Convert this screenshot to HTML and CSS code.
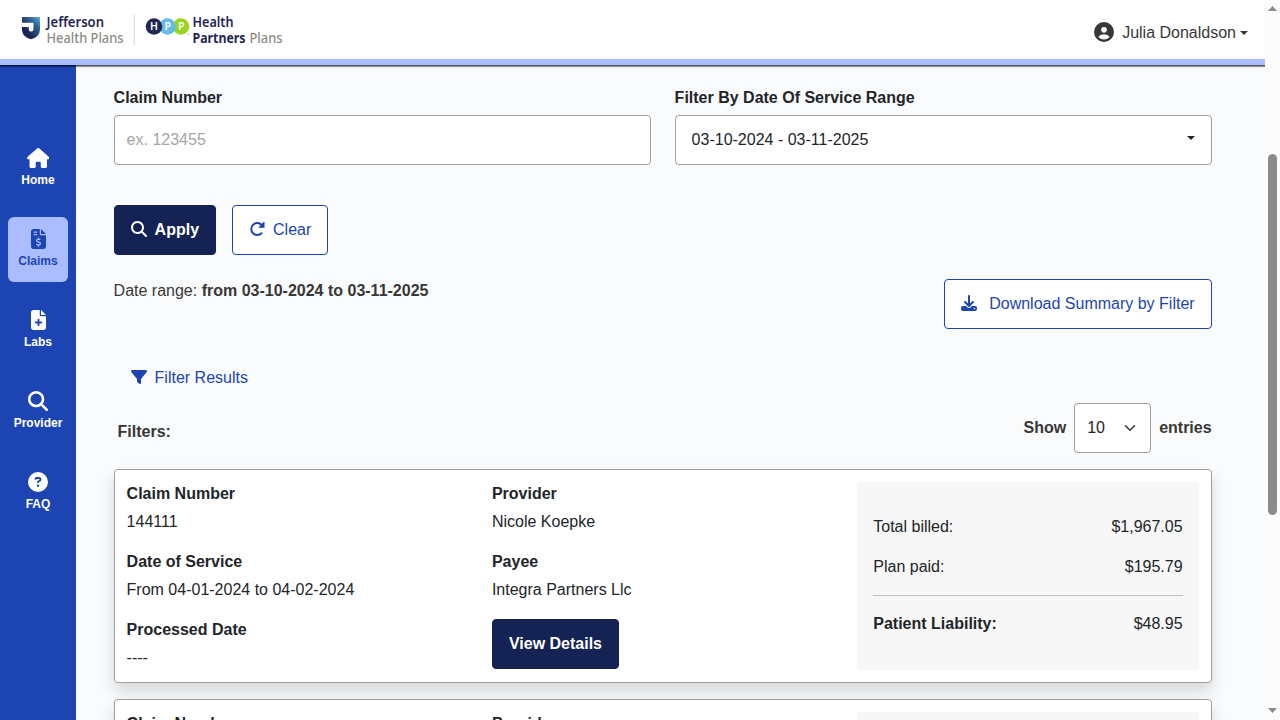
FILE: index.html
```html
<!DOCTYPE html>
<html lang="en">
<head>
<meta charset="utf-8">
<title>Claims</title>
<link rel="stylesheet" href="styles.css">
</head>
<body>
<div class="window">
  <div class="app">
    <header class="header">
      <svg class="logo" width="270" height="40" viewBox="0 0 270 40">
        <defs>
          <linearGradient id="shield" x1="1" y1="0" x2=".35" y2=".75">
            <stop offset="0" stop-color="#5fb3df"/>
            <stop offset=".45" stop-color="#2d5f92"/>
            <stop offset="1" stop-color="#1c2450"/>
          </linearGradient>
        </defs>
        <path d="M2 5H20V17Q20 25 11 27.200Q3 25.500 2 18.500V15H8.800V17.300Q8.800 19.500 11 19.500Q13.500 19.500 13.500 17V10.700H2Z" fill="url(#shield)"/>
        <g class="logo-text">
          <text x="26.500" y="15.300" textLength="57.500" lengthAdjust="spacingAndGlyphs" class="logo-navy">Jefferson</text>
          <text x="26.500" y="31" textLength="77" lengthAdjust="spacingAndGlyphs" class="logo-gray">Health Plans</text>
          <text x="172.500" y="15.300" textLength="41" lengthAdjust="spacingAndGlyphs" class="logo-navy">Health</text>
          <text x="172.500" y="31" textLength="53" lengthAdjust="spacingAndGlyphs" class="logo-navy bold">Partners</text>
          <text x="229.500" y="31" textLength="33" lengthAdjust="spacingAndGlyphs" class="logo-gray">Plans</text>
        </g>
        <path d="M114.300 3V33" stroke="#dcdcdc" stroke-width="1.200"/>
        <circle cx="161" cy="14.500" r="8.300" fill="#97d51f"/>
        <circle cx="147.500" cy="14.500" r="8.300" fill="#68bbe6"/>
        <circle cx="134" cy="14.500" r="8.300" fill="#1f2654"/>
        <g class="logo-initials"><text x="134" y="18.300">H</text><text x="147.700" y="18.300">P</text><text x="161.200" y="18.300">P</text></g>
        <circle cx="18.700" cy="25" r=".8" fill="#c4c4c4"/>
        <circle cx="168" cy="22" r=".8" fill="#b4b4b4"/>
      </svg>
      <div class="user">
        <svg width="20" height="20" viewBox="0 0 512 512"><path d="M399 384.200C376.900 345.800 335.400 320 288 320l-64 0c-47.400 0-88.900 25.800-111 64.200c35.200 39.200 86.200 63.800 143 63.800s107.800-24.700 143-63.800zM0 256a256 256 0 1 1 512 0A256 256 0 1 1 0 256zm256 16a72 72 0 1 0 0-144 72 72 0 1 0 0 144z"/></svg>
        <span>Julia Donaldson</span><i class="caret"></i>
      </div>
    </header>
    <div class="body">
      <nav class="sidebar">
        <a class="nav-item"><svg width="22.500" height="20" viewBox="0 0 576 512"><path d="M575.800 255.500c0 18-15 32.100-32 32.100l-32 0 .7 160.200c0 2.700-.2 5.400-.5 8.100l0 16.200c0 22.100-17.900 40-40 40l-16 0c-1.100 0-2.200 0-3.300-.1c-1.400 .1-2.800 .1-4.200 .1L416 512l-24 0c-22.100 0-40-17.900-40-40l0-24 0-64c0-17.700-14.300-32-32-32l-64 0c-17.700 0-32 14.300-32 32l0 64 0 24c0 22.100-17.900 40-40 40l-24 0-31.900 0c-1.500 0-3-.1-4.500-.2c-1.200 .1-2.400 .2-3.600 .2l-16 0c-22.100 0-40-17.900-40-40l0-112c0-.9 0-1.900 .1-2.800l0-69.700-32 0c-18 0-32-14-32-32.100c0-9 3-17 10-24L266.400 8c7-7 15-8 22-8s15 2 21 7L564.800 231.500c8 7 12 15 11 24z"/></svg>Home</a>
        <a class="nav-item active"><svg width="15" height="20" viewBox="0 0 384 512"><path d="M64 0C28.700 0 0 28.700 0 64L0 448c0 35.300 28.700 64 64 64l256 0c35.300 0 64-28.700 64-64l0-288-128 0c-17.700 0-32-14.300-32-32L224 0 64 0zM256 0l0 128 128 0L256 0zM64 80c0-8.800 7.200-16 16-16l64 0c8.800 0 16 7.200 16 16s-7.200 16-16 16L80 96c-8.800 0-16-7.200-16-16zm0 64c0-8.800 7.200-16 16-16l64 0c8.800 0 16 7.200 16 16s-7.200 16-16 16l-64 0c-8.800 0-16-7.200-16-16zm128 72c8.800 0 16 7.200 16 16l0 17.300c8.500 1.200 16.700 3.100 24.100 5.100c8.500 2.300 13.600 11 11.300 19.600s-11 13.600-19.600 11.300c-11.100-3-22-5.200-32.100-5.300c-8.400-.1-17.400 1.800-23.600 5.500c-5.700 3.400-8.100 7.300-8.100 12.800c0 3.700 1.300 6.500 7.300 10.100c6.900 4.100 16.600 7.100 29.200 10.900l.5 .1c11.300 3.400 25.300 7.600 36.300 14.600c12.100 7.600 22.400 19.700 22.700 38.200c.3 19.300-9.600 33.300-22.900 41.600c-7.700 4.800-16.400 7.600-25.100 9.100l0 17.100c0 8.800-7.200 16-16 16s-16-7.200-16-16l0-17.800c-11.200-2.100-21.700-5.700-30.900-8.900c-2.100-.7-4.200-1.400-6.200-2.100c-8.400-2.800-12.900-11.900-10.100-20.200s11.900-12.900 20.200-10.100c2.500 .8 4.800 1.600 7.100 2.400c13.600 4.600 24.600 8.400 36.300 8.700c9.100 .3 17.900-1.700 23.700-5.300c5.100-3.200 7.900-7.300 7.800-14c-.1-4.600-1.800-7.800-7.700-11.600c-6.800-4.300-16.500-7.400-29-11.200l-1.600-.5c-11-3.300-24.300-7.300-34.800-13.700c-12-7.200-22.600-18.900-22.700-37.300c-.1-19.400 10.800-32.800 23.800-40.500c7.500-4.400 15.800-7.200 24.100-8.700l0-17.300c0-8.800 7.200-16 16-16z"/></svg>Claims</a>
        <a class="nav-item"><svg width="15" height="20" viewBox="0 0 384 512"><path fill-rule="evenodd" d="M64 0C28.700 0 0 28.700 0 64L0 448c0 35.300 28.700 64 64 64l256 0c35.300 0 64-28.700 64-64l0-288-128 0c-17.700 0-32-14.300-32-32L224 0 64 0zM256 0l0 128 128 0L256 0zM168 248c0-13.300 10.700-24 24-24s24 10.700 24 24l0 48 48 0c13.300 0 24 10.700 24 24s-10.700 24-24 24l-48 0 0 48c0 13.300-10.700 24-24 24s-24-10.700-24-24l0-48-48 0c-13.300 0-24-10.700-24-24s10.700-24 24-24l48 0 0-48z"/></svg>Labs</a>
        <a class="nav-item"><svg width="20" height="20" viewBox="0 0 512 512"><path d="M416 208c0 45.900-14.900 88.300-40 122.700L502.600 457.400c12.500 12.500 12.500 32.800 0 45.300s-32.800 12.500-45.300 0L330.700 376c-34.400 25.200-76.800 40-122.700 40C93.100 416 0 322.900 0 208S93.100 0 208 0S416 93.100 416 208zM208 352a144 144 0 1 0 0-288 144 144 0 1 0 0 288z"/></svg>Provider</a>
        <a class="nav-item"><svg width="20" height="20" viewBox="0 0 512 512"><path d="M256 512A256 256 0 1 0 256 0a256 256 0 1 0 0 512zM169.800 165.300c7.900-22.300 29.100-37.300 52.800-37.300l58.300 0c34.900 0 63.100 28.300 63.100 63.100c0 22.600-12.100 43.500-31.700 54.800L280 264.400c-.2 13-10.900 23.600-24 23.600c-13.300 0-24-10.700-24-24l0-13.500c0-8.600 4.600-16.500 12.100-20.800l44.300-25.400c4.700-2.700 7.600-7.700 7.600-13.100c0-8.400-6.800-15.100-15.100-15.100l-58.300 0c-3.400 0-6.400 2.100-7.500 5.300l-.4 1.200c-4.400 12.500-18.200 19-30.600 14.600s-19-18.200-14.600-30.600l.4-1.200zM224 352a32 32 0 1 1 64 0 32 32 0 1 1 -64 0z"/></svg>FAQ</a>
      </nav>
      <main class="main">
        <div class="fields">
          <div class="field"><label>Claim Number</label><div class="control placeholder">ex. 123455</div></div>
          <div class="field"><label>Filter By Date Of Service Range</label><div class="control date">03-10-2024 - 03-11-2025<i class="caret"></i></div></div>
        </div>
        <div class="actions">
          <div class="btn solid"><svg width="16" height="16" viewBox="0 0 512 512"><path d="M416 208c0 45.900-14.900 88.300-40 122.700L502.600 457.400c12.500 12.500 12.500 32.800 0 45.300s-32.800 12.500-45.300 0L330.700 376c-34.400 25.200-76.800 40-122.700 40C93.100 416 0 322.900 0 208S93.100 0 208 0S416 93.100 416 208zM208 352a144 144 0 1 0 0-288 144 144 0 1 0 0 288z"/></svg>Apply</div>
          <div class="btn outline"><svg width="16" height="16" viewBox="0 0 16 16"><path d="M12.700 4A6 6 0 1 0 12.500 12.300" fill="none" stroke="currentColor" stroke-width="2" stroke-linecap="round"/><path d="M15.500 1.300V6.300Q15.500 6.800 15 6.800H10.100Q9.300 6.600 9.800 6L14.600 1Q15.300 .6 15.500 1.300Z"/></svg>Clear</div>
        </div>
        <div class="summary">
          <p>Date range: <b>from 03-10-2024 to 03-11-2025</b></p>
          <div class="btn outline download"><svg width="16" height="16" viewBox="0 0 512 512"><path d="M288 32c0-17.700-14.300-32-32-32s-32 14.300-32 32l0 242.700-73.400-73.400c-12.500-12.500-32.800-12.500-45.300 0s-12.500 32.800 0 45.300l128 128c12.500 12.500 32.800 12.500 45.300 0l128-128c12.500-12.500 12.500-32.800 0-45.300s-32.800-12.500-45.300 0L288 274.700 288 32zM64 352c-35.300 0-64 28.700-64 64l0 32c0 35.300 28.700 64 64 64l384 0c35.300 0 64-28.700 64-64l0-32c0-35.300-28.700-64-64-64l-101.500 0-45.300 45.300c-25 25-65.500 25-90.500 0L165.500 352 64 352zm368 56a24 24 0 1 1 0 48 24 24 0 1 1 0-48z"/></svg>Download Summary by Filter</div>
        </div>
        <div class="filter-link"><svg width="16" height="16" viewBox="0 0 512 512"><path d="M3.900 54.900C10.500 40.900 24.500 32 40 32l432 0c15.500 0 29.500 8.900 36.100 22.900s4.600 30.500-5.200 42.500L320 320.900 320 448c0 12.100-6.800 23.200-17.700 28.600s-23.800 4.300-33.500-3l-64-48c-8.100-6-12.800-15.500-12.800-25.600l0-79.100L9 97.300C-.7 85.400-2.800 68.800 3.900 54.900z"/></svg>Filter Results</div>
        <div class="list-head">
          <b class="filters">Filters:</b>
          <div class="page-size"><b>Show</b><div class="select">10<svg width="12" height="12" viewBox="0 0 16 16"><path d="m2 5 6 6 6-6" fill="none" stroke="#343a40" stroke-width="2" stroke-linecap="round" stroke-linejoin="round"/></svg></div><b>entries</b></div>
        </div>
        <section class="card">
          <dl class="facts">
            <dt>Claim Number</dt><dd>144111</dd>
            <dt>Date of Service</dt><dd>From 04-01-2024 to 04-02-2024</dd>
            <dt>Processed Date</dt><dd>----</dd>
          </dl>
          <dl class="facts">
            <dt>Provider</dt><dd>Nicole Koepke</dd>
            <dt>Payee</dt><dd>Integra Partners Llc</dd>
            <div class="btn solid details">View Details</div>
          </dl>
          <div class="totals">
            <div class="total"><span>Total billed:</span><span>$1,967.05</span></div>
            <div class="total"><span>Plan paid:</span><span>$195.79</span></div>
            <div class="total liability"><b>Patient Liability:</b><span>$48.95</span></div>
          </div>
        </section>
        <section class="card">
          <dl class="facts"><dt>Claim Number</dt></dl>
          <dl class="facts"><dt>Provider</dt></dl>
          <div class="totals"></div>
        </section>
      </main>
    </div>
  </div>
  <div class="scrollbar">
    <svg class="arrow-up" width="9" height="5" viewBox="0 0 9 5"><path d="M0 5 4.500 0 9 5Z"/></svg>
    <i class="thumb"></i>
    <svg class="arrow-down" width="9" height="5" viewBox="0 0 9 5"><path d="M0 0 4.500 5 9 0Z"/></svg>
  </div>
</div>
</body>
</html>
```
FILE: styles.css
```css
* { box-sizing: border-box; }
body { margin: 0; font: 16px/24px "Liberation Sans", Arial, sans-serif; color: #212529; }
p, dl, dd { margin: 0; }
svg { flex: none; fill: currentColor; }
.window { display: flex; width: 1280px; height: 720px; overflow: hidden; background: #fafbfd; }
.app { display: flex; flex-direction: column; width: 1265px; height: 720px; }
.header { display: flex; flex: none; justify-content: space-between; height: 65px; padding: 12px 17px 0 20px; background: #fff; border-bottom: 6px solid #abbdff; box-shadow: 0 1px 0 rgba(0, 0, 0, .45), 0 2px 1px rgba(0, 0, 0, .4); clip-path: inset(0 0 -4px 0); position: relative; z-index: 1; }
.logo { display: block; }
.logo-text { font: 500 14px "Noto Sans", "Open Sans", sans-serif; }
.logo-navy { fill: #1f2654; font-weight: 600; }
.bold { font-weight: 700; }
.logo-gray { fill: #8c8d82; }
.logo-initials { fill: #fff; font: 600 10.500px "Noto Sans", sans-serif; text-anchor: middle; }
.user { display: flex; align-items: center; height: 41px; color: #373737; }
.user svg { margin-bottom: 1px; }
.user span { margin: 0 4px 0 8px; }
.caret { flex: none; border: solid transparent; border-width: 4.800px 4.800px 0; border-top-color: currentColor; }
.body { display: flex; flex: 1; min-height: 0; }
.sidebar { display: flex; flex-direction: column; flex: none; gap: 16px; width: 76px; padding: 71px 8px 0; background: #1d44b3; }
.nav-item { display: flex; flex-direction: column; align-items: center; flex: none; height: 65px; padding-top: 12px; border-radius: 6px; color: #fff; font-size: 12px; font-weight: 700; line-height: 24px; }
.active { background: #abbdff; color: #1d44b3; }
.main { flex: 1; min-width: 0; padding: 21px 53.400px 0 37.600px; }
.fields { display: flex; gap: 24px; }
.field { flex: 1; }
.field label { display: block; margin-bottom: 5px; font-weight: 700; }
.control { display: flex; align-items: center; height: 50px; padding: 0 12px; background: #fff; border: 1px solid #a0a0a0; border-radius: 4px; }
.placeholder { color: #a6a6a6; }
.date { justify-content: space-between; padding: 0 16px; }
.date .caret { margin-bottom: 4px; }
.actions { display: flex; gap: 16px; margin-top: 40px; }
.btn { display: flex; align-items: center; gap: 8px; width: max-content; height: 50px; padding: 0 16px; border: 1px solid #1d44b3; border-radius: 4px; }
.btn svg { margin-bottom: 2px; }
.solid { background: #142254; border-color: #142254; color: #fff; font-weight: 700; }
.outline { background: #fff; color: #1d44b3; }
.download { gap: 12px; }
.summary { display: flex; justify-content: space-between; margin-top: 24px; color: #373737; }
.filter-link { display: flex; align-items: center; gap: 8px; margin: 37px 0 0 17px; color: #1d44b3; }
.filter-link svg { margin-bottom: 2px; }
.list-head { display: flex; align-items: center; justify-content: space-between; margin-top: 13px; color: #373737; }
.filters { padding: 8px 0 0 4px; }
.page-size { display: flex; align-items: center; gap: 8px; }
.select { display: flex; align-items: center; justify-content: space-between; width: 77px; height: 50px; padding: 0 14px 0 12px; background: #fff; border: 1px solid #a0a0a0; border-radius: 4px; color: #212529; }
.card { display: grid; grid-template-columns: repeat(3, 1fr); column-gap: 24px; height: 214px; margin-top: 16px; padding: 12px; background: #fff; border: 1px solid #a0a0a0; border-radius: 4px; box-shadow: 0 8px 16px rgba(0, 0, 0, .15); }
.facts dt { font-weight: 700; }
.facts dd { margin: 4px 0 16px; }
.details { margin-top: 17px; }
.totals { height: 188px; padding: 33px 16px 0; background: #f7f7f7; }
.total { display: flex; justify-content: space-between; margin-bottom: 16px; }
.liability { padding-top: 16px; border-top: 1px solid #bebebe; }
.scrollbar { display: flex; flex-direction: column; align-items: center; width: 15px; height: 720px; padding: 6px 0 7px; background: #fcfcfc; color: #8b8b8b; }
.arrow-down { margin-top: auto; }
.thumb { width: 9px; height: 361px; margin-top: 143px; border-radius: 5px; background: #8b8b8b; }
```
